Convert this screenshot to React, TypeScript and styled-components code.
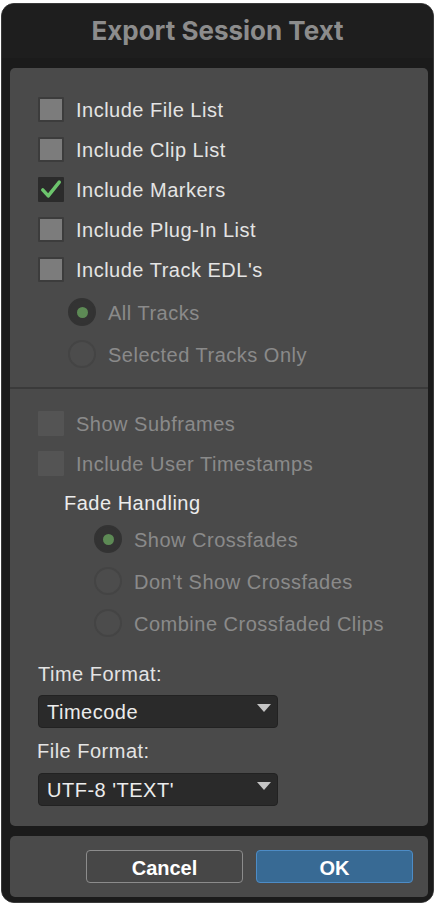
import React from "react";
import styled, { createGlobalStyle } from "styled-components";

const Global = createGlobalStyle`
  html, body { margin: 0; padding: 0; background: #ffffff; }
  body { font-family: "Liberation Sans", Arial, sans-serif; }
  * { box-sizing: border-box; }
`;

const Window = styled.div`
  margin: 3px 0 0 1px;
  width: 433px;
  height: 900px;
  background: #1c1c1c;
  border: 1px solid #3a3a3a;
  border-radius: 13px;
  display: flex;
  flex-direction: column;
  overflow: hidden;
`;

const TitleBar = styled.div`
  height: 54px;
  flex: none;
  display: flex;
  align-items: center;
  justify-content: center;
  background: #1e1e1e;
  font-family: Inter, "Liberation Sans", sans-serif;
  font-weight: 700;
  font-size: 26px;
  color: #8c8c8c;
  padding-bottom: 2px;
`;

const Body = styled.div`
  flex: 1;
  display: flex;
  flex-direction: column;
  padding: 10px 5px 5px 8px;
  gap: 10px;
  background: #1b1b1b;
`;

const Panel = styled.div`
  background: #4a4a4a;
  border-radius: 5px;
  height: 758px;
  display: flex;
  flex-direction: column;
`;

const Section = styled.div<{ $pt: number; $pb: number }>`
  padding: ${(p) => p.$pt}px 28px ${(p) => p.$pb}px 28px;
  display: flex;
  flex-direction: column;
`;

const Separator = styled.div`
  height: 2px;
  background: #3a3a3a;
`;

const Row = styled.div<{ $h?: number; $indent?: number; $mt?: number }>`
  height: ${(p) => p.$h ?? 40}px;
  margin-top: ${(p) => p.$mt ?? 0}px;
  padding-left: ${(p) => p.$indent ?? 0}px;
  display: flex;
  align-items: center;
  gap: 12px;
`;

const Label = styled.span<{ $disabled?: boolean }>`
  font-size: 20px;
  letter-spacing: 0.5px;
  padding-top: 2px;
  color: ${(p) => (p.$disabled ? "#8a8a8a" : "#e4e4e4")};
  white-space: nowrap;
`;

const Box = styled.div<{ $state: "off" | "on" | "disabled" }>`
  width: 26px;
  height: 25px;
  flex: none;
  border-radius: 1px;
  display: flex;
  align-items: center;
  justify-content: center;
  background: ${(p) =>
    p.$state === "on" ? "#2b2b2b" : p.$state === "disabled" ? "#545454" : "#7c7c7c"};
  border: 2px solid
    ${(p) => (p.$state === "disabled" ? "#545454" : p.$state === "on" ? "#2b2b2b" : "#3c3c3c")};
`;

const Radio = styled.div<{ $on?: boolean }>`
  width: 28px;
  height: 28px;
  flex: none;
  border-radius: 50%;
  display: flex;
  align-items: center;
  justify-content: center;
  background: ${(p) => (p.$on ? "#333333" : "#4c4c4c")};
  border: 2px solid ${(p) => (p.$on ? "#333333" : "#444444")};
`;

const Dot = styled.div`
  width: 11px;
  height: 11px;
  border-radius: 50%;
  background: #5d8a55;
`;

const GroupTitle = styled.div`
  height: 30px;
  margin-top: 5px;
  padding-left: 26px;
  display: flex;
  align-items: center;
  font-size: 20px;
  letter-spacing: 0.5px;
  color: #ececec;
`;

const FieldLabel = styled.div<{ $mt: number; $ml?: number }>`
  height: 24px;
  margin-top: ${(p) => p.$mt}px;
  margin-left: ${(p) => p.$ml ?? 0}px;
  display: flex;
  align-items: center;
  font-size: 20px;
  letter-spacing: 0.5px;
  color: #e4e4e4;
`;

const Select = styled.div<{ $mt: number }>`
  position: relative;
  margin-top: ${(p) => p.$mt}px;
  width: 240px;
  height: 33px;
  background: #2a2a2a;
  border: 1px solid #222222;
  border-radius: 4px;
  display: flex;
  align-items: center;
  padding: 2px 0 0 8px;
  font-size: 20px;
  letter-spacing: 0.5px;
  color: #ececec;
`;

const Caret = styled.div`
  position: absolute;
  right: 6px;
  top: 8px;
  width: 0;
  height: 0;
  border-left: 7px solid transparent;
  border-right: 7px solid transparent;
  border-top: 8px solid #c4c4c4;
`;

const Footer = styled.div`
  background: #4a4a4a;
  border-radius: 5px;
  height: 61px;
  display: flex;
  justify-content: flex-end;
  align-items: center;
  gap: 13px;
  padding-right: 15px;
`;

const Button = styled.button<{ $primary?: boolean }>`
  width: 157px;
  height: 33px;
  border-radius: 4px;
  font-family: "Liberation Sans", Arial, sans-serif;
  font-weight: 700;
  font-size: 20px;
  color: #ffffff;
  background: ${(p) => (p.$primary ? "#386a94" : "#474747")};
  border: 1px solid ${(p) => (p.$primary ? "#4d8cc6" : "#8c8c8c")};
  padding: 3px 0 0 0;
`;

const Check = () => (
  <svg width="24" height="22" viewBox="0 0 24 22">
    <path
      d="M3 12 L9 18.5 L21 3.5"
      fill="none"
      stroke="#6cc46c"
      strokeWidth="3.8"
      strokeLinecap="round"
      strokeLinejoin="round"
    />
  </svg>
);

const CheckRow = ({
  label,
  state,
}: {
  label: string;
  state: "off" | "on" | "disabled";
}) => (
  <Row>
    <Box $state={state}>{state === "on" && <Check />}</Box>
    <Label $disabled={state === "disabled"}>{label}</Label>
  </Row>
);

const RadioRow = ({
  label,
  on,
  indent,
  mt,
}: {
  label: string;
  on?: boolean;
  indent: number;
  mt?: number;
}) => (
  <Row $h={42} $indent={indent} $mt={mt}>
    <Radio $on={on}>{on && <Dot />}</Radio>
    <Label $disabled>{label}</Label>
  </Row>
);

export default function App() {
  return (
    <>
      <Global />
      <Window>
        <TitleBar>Export Session Text</TitleBar>
        <Body>
          <Panel>
            <Section $pt={21} $pb={12}>
              <CheckRow label="Include File List" state="off" />
              <CheckRow label="Include Clip List" state="off" />
              <CheckRow label="Include Markers" state="on" />
              <CheckRow label="Include Plug-In List" state="off" />
              <CheckRow label="Include Track EDL's" state="off" />
              <RadioRow label="All Tracks" on indent={30} mt={2} />
              <RadioRow label="Selected Tracks Only" indent={30} />
            </Section>
            <Separator />
            <Section $pt={14} $pb={0}>
              <CheckRow label="Show Subframes" state="disabled" />
              <CheckRow label="Include User Timestamps" state="disabled" />
              <GroupTitle>Fade Handling</GroupTitle>
              <RadioRow label="Show Crossfades" on indent={56} />
              <RadioRow label="Don't Show Crossfades" indent={56} />
              <RadioRow label="Combine Crossfaded Clips" indent={56} />
              <FieldLabel $mt={18}>Time Format:</FieldLabel>
              <Select $mt={9}>
                Timecode
                <Caret />
              </Select>
              <FieldLabel $mt={11} $ml={-1}>
                File Format:
              </FieldLabel>
              <Select $mt={10}>
                UTF-8 'TEXT'
                <Caret />
              </Select>
            </Section>
          </Panel>
          <Footer>
            <Button>Cancel</Button>
            <Button $primary>OK</Button>
          </Footer>
        </Body>
      </Window>
    </>
  );
}
